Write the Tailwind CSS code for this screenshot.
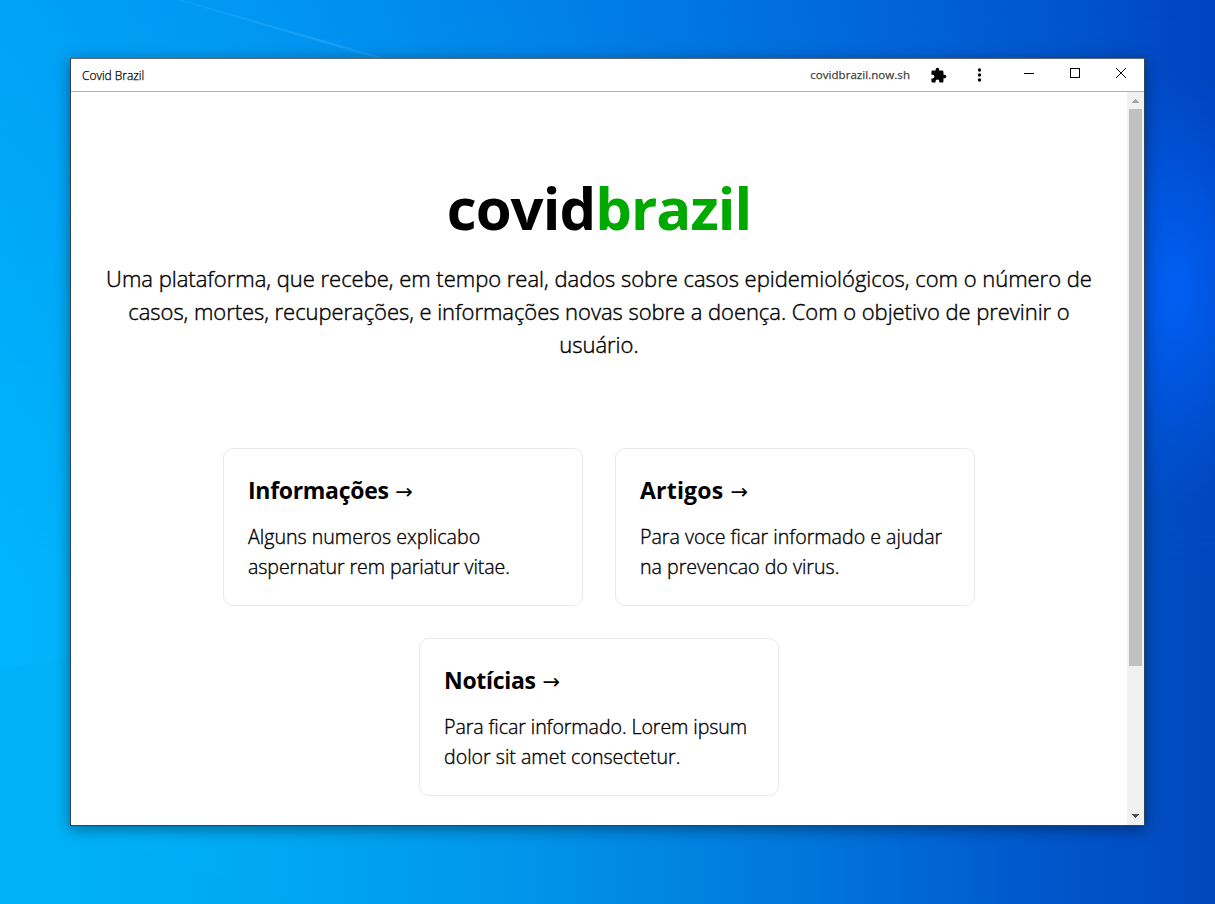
<!DOCTYPE html>
<html lang="pt-BR">
<head>
<meta charset="utf-8">
<title>Covid Brazil</title>
<script src="https://cdn.jsdelivr.net/npm/@tailwindcss/browser@4"></script>
</head>
<body class="relative h-[904px] w-[1215px] overflow-hidden bg-[#0078e4] pl-[70px] pt-[58px] font-['Open_Sans','Noto_Sans',sans-serif] text-black">

<!-- Wallpaper -->
<svg class="absolute inset-0 h-full w-full" viewBox="0 0 1215 904" preserveAspectRatio="none" aria-hidden="true">
  <defs>
    <linearGradient id="top" x1="0" x2="1" y1="0" y2="0">
      <stop offset="0" stop-color="#00a2f8"/><stop offset=".2" stop-color="#0098f2"/><stop offset=".45" stop-color="#0082e8"/><stop offset=".7" stop-color="#0068dc"/><stop offset=".88" stop-color="#0055ce"/><stop offset="1" stop-color="#0043c0"/>
    </linearGradient>
    <linearGradient id="bottom" x1="0" x2="1" y1="0" y2="0">
      <stop offset="0" stop-color="#00b6fc"/><stop offset=".2" stop-color="#00aaf3"/><stop offset=".42" stop-color="#0096eb"/><stop offset=".65" stop-color="#0078dc"/><stop offset=".85" stop-color="#0058cc"/><stop offset="1" stop-color="#0048bc"/>
    </linearGradient>
    <linearGradient id="fade" x1="0" x2="0" y1="0" y2="1">
      <stop offset="0" stop-color="#000"/><stop offset=".65" stop-color="#fff"/>
    </linearGradient>
    <mask id="m"><rect width="1215" height="904" fill="url(#fade)"/></mask>
    <radialGradient id="glow" gradientUnits="userSpaceOnUse" cx="0" cy="0" r="1" gradientTransform="translate(1175 290) scale(110 220)">
      <stop offset="0" stop-color="#0060f4"/><stop offset=".5" stop-color="#005aea" stop-opacity=".6"/><stop offset="1" stop-color="#0055e0" stop-opacity="0"/>
    </radialGradient>
    <linearGradient id="ray" x1="0" x2="1" y1="0" y2="0">
      <stop offset="0" stop-color="#48b8ff" stop-opacity=".1"/><stop offset=".7" stop-color="#48b8ff" stop-opacity=".35"/><stop offset="1" stop-color="#48b8ff" stop-opacity=".2"/>
    </linearGradient>
  </defs>
  <rect width="1215" height="904" fill="url(#top)"/>
  <rect width="1215" height="904" fill="url(#bottom)" mask="url(#m)"/>
  <rect x="1060" y="50" width="155" height="480" fill="url(#glow)"/>
  <path d="M165 -5L385 58H375L160 -5Z" fill="url(#ray)"/>
  <path d="M0 669L70 660V826L300 904H0Z" fill="#00a8f0" fill-opacity=".2"/>
</svg>

<!-- Application window -->
<div class="relative flex h-[768px] w-[1075px] flex-col border border-[#2b4656] border-t-[#5b6a76] bg-white shadow-[0_3px_14px_rgba(0,0,0,0.42)]">
  <header class="flex h-[33px] shrink-0 items-center border-b border-[#b1b1b1] pl-[11px]">
    <span class="pt-px text-[12px] font-light leading-4 tracking-[-0.03px] [-webkit-text-stroke:0.25px_#000]">Covid Brazil</span>
    <span class="ml-auto text-[11.5px] leading-4 tracking-[0.05px] text-[#444] [-webkit-text-stroke:0.25px_#444]">covidbrazil.now.sh</span>
    <svg class="ml-[20px] size-[17px]" viewBox="0 0 24 24" fill="#000"><path d="M20.5 11H19V7c0-1.1-.9-2-2-2h-4V3.500C13 2.120 11.880 1 10.500 1S8 2.120 8 3.500V5H4c-1.100 0-1.990.9-1.990 2v3.800H3.500c1.490 0 2.700 1.210 2.700 2.700s-1.210 2.700-2.700 2.700H2V20c0 1.100.9 2 2 2h3.800v-1.500c0-1.490 1.210-2.700 2.700-2.700s2.700 1.210 2.700 2.700V22H17c1.100 0 2-.9 2-2v-4h1.500c1.380 0 2.500-1.120 2.500-2.500S21.880 11 20.500 11z"/></svg>
    <svg class="ml-[30px] h-4 w-[5px]" viewBox="0 0 5 16" fill="#000"><circle cx="2.500" cy="3" r="1.650"/><circle cx="2.500" cy="8" r="1.650"/><circle cx="2.500" cy="13" r="1.650"/></svg>
    <div class="mb-[5px] ml-[42px] mr-[18px] flex gap-9">
      <svg class="size-[10px]" viewBox="0 0 10 10" shape-rendering="crispEdges"><path d="M0 5h10v1H0z"/></svg>
      <svg class="size-[10px]" viewBox="0 0 10 10" shape-rendering="crispEdges"><path d="M.5.5h9v9h-9z" fill="none" stroke="#000"/></svg>
      <svg class="size-[10px]" viewBox="0 0 10 10"><path d="M0 0l10 10M10 0L0 10" stroke="#000"/></svg>
    </div>
  </header>

  <div class="flex min-h-0 flex-1">
    <main class="flex flex-1 flex-col items-center overflow-hidden pt-[81px]">
      <h1 class="h-[70px] text-[58px] font-bold leading-[70px] tracking-[-0.95px]">covid<span class="text-[#00a800]">brazil</span></h1>
      <p class="mt-[19px] whitespace-nowrap text-center text-[22px] font-light leading-[33px] tracking-[-0.02px] [-webkit-text-stroke:0.4px_#000]">Uma plataforma, que recebe, em tempo real, dados sobre casos epidemiológicos, com o número de<br><span class="tracking-[-0.05px]">casos, mortes, recuperações, e informações novas sobre a doença. Com o objetivo de previnir o</span><br>usuário.</p>

      <div class="mt-[87px] flex w-[800px] flex-wrap justify-center gap-8">
        <section class="h-[158px] w-[360px] rounded-[10px] border border-[#eaeaea] p-6">
          <h2 class="mb-3 text-[23px] font-bold leading-[35px] tracking-[-0.3px]">Informações <span class="ml-px font-['DejaVu_Sans'] text-[21px] font-normal">→</span></h2>
          <p class="whitespace-nowrap text-[19.6px] font-light leading-[30px] [-webkit-text-stroke:0.35px_#000]">Alguns numeros explicabo<br><span class="tracking-[-0.08px]">aspernatur rem pariatur vitae.</span></p>
        </section>
        <section class="h-[158px] w-[360px] rounded-[10px] border border-[#eaeaea] p-6">
          <h2 class="mb-3 text-[23px] font-bold leading-[35px] tracking-[0.2px]">Artigos <span class="ml-px font-['DejaVu_Sans'] text-[21px] font-normal">→</span></h2>
          <p class="whitespace-nowrap text-[19.6px] font-light leading-[30px] [-webkit-text-stroke:0.35px_#000]">Para voce ficar informado e ajudar<br>na prevencao do virus.</p>
        </section>
        <section class="h-[158px] w-[360px] rounded-[10px] border border-[#eaeaea] p-6">
          <h2 class="mb-3 text-[23px] font-bold leading-[35px] tracking-[-0.3px]">Notícias <span class="ml-px font-['DejaVu_Sans'] text-[21px] font-normal">→</span></h2>
          <p class="whitespace-nowrap text-[19.6px] font-light leading-[30px] [-webkit-text-stroke:0.35px_#000]"><span class="tracking-[-0.08px]">Para ficar informado. Lorem ipsum</span><br>dolor sit amet consectetur.</p>
        </section>
      </div>
    </main>

    <!-- Scrollbar -->
    <div class="flex w-[17px] shrink-0 flex-col items-center bg-[#f1f1f1]">
      <svg class="h-[17px] w-[17px] shrink-0" viewBox="0 0 17 17" fill="#a3a3a3" shape-rendering="crispEdges"><path d="M8 7h1v1h1v1h1v1h1v1H5v-1h1V9h1V8h1z"/></svg>
      <div class="h-[557px] w-[13px] bg-[#c1c1c1]"></div>
      <svg class="mt-auto h-[17px] w-[17px] shrink-0" viewBox="0 0 17 17" fill="#505050" shape-rendering="crispEdges"><path d="M5 6h7v1h-1v1h-1v1H9v1H8V9H7V8H6V7H5z"/></svg>
    </div>
  </div>
</div>
</body>
</html>
